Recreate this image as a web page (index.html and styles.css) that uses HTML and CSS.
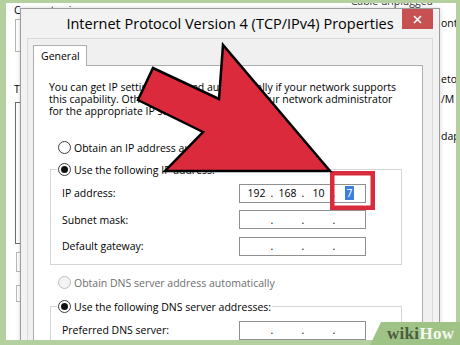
FILE: index.html
```html
<!DOCTYPE html>
<html>

<head>
  <meta charset="UTF-8">
  <meta name="viewport" content="width=device-width, initial-scale=1.0">
  <title>Internet Protocol Version 4 (TCP/IPv4) Properties</title>
  <link rel="stylesheet" href="styles.css">
</head>

<body>
  <div class="screen">
    <div class="desk">
      <!-- windows behind the dialog -->
      <div class="back-left">
        <div class="bl-label">Connect using:</div>
        <div class="bl-box"></div>
        <div class="bl-label bl-items">This connection uses the following items:</div>
        <div class="bl-list"></div>
        <div class="bl-btn"></div>
        <div class="bl-btn bl-btn-2"></div>
      </div>
      <div class="back-right">
        <div class="br-top">Cable unplugged</div>
        <div class="br-frag br-1">ont</div>
        <div class="br-frag br-2">eto</div>
        <div class="br-frag br-3">/M</div>
        <div class="br-frag br-4">dap</div>
      </div>

      <div class="dialog">
        <div class="titlebar">
          <div class="title">Internet Protocol Version 4 (TCP/IPv4) Properties</div>
          <div class="close">
            <svg width="9" height="9" viewBox="0 0 9 9">
              <path d="M1 1 L8 8 M8 1 L1 8" stroke="#fff" stroke-width="1.6" />
            </svg>
          </div>
        </div>

        <div class="client">
          <div class="tab">General</div>
          <div class="panel">
            <p class="intro">You can get IP settings assigned automatically if your network supports<br>
              this capability. Otherwise, you need to ask your network administrator<br>
              for the appropriate IP settings.</p>

            <div class="radio-row row-auto">
              <span class="radio"></span>
              <span>Obtain an IP address automatically</span>
            </div>

            <fieldset class="group">
              <legend>
                <span class="radio-row">
                  <span class="radio on"></span>
                  <span>Use the following IP address:</span>
                </span>
              </legend>
              <div class="ip-rows">
                <div class="ip-row">
                  <span class="ip-label">IP address:</span>
                  <div class="ipbox">
                    <span>192</span><span>.</span><span>168</span><span>.</span><span>10</span><span>.</span><span><b class="sel">7</b></span>
                  </div>
                </div>
                <div class="ip-row">
                  <span class="ip-label">Subnet mask:</span>
                  <div class="ipbox">
                    <span></span><span>.</span><span></span><span>.</span><span></span><span>.</span><span></span>
                  </div>
                </div>
                <div class="ip-row">
                  <span class="ip-label">Default gateway:</span>
                  <div class="ipbox">
                    <span></span><span>.</span><span></span><span>.</span><span></span><span>.</span><span></span>
                  </div>
                </div>
              </div>
            </fieldset>

            <div class="radio-row row-dns disabled">
              <span class="radio"></span>
              <span>Obtain DNS server address automatically</span>
            </div>

            <fieldset class="group group-dns">
              <legend>
                <span class="radio-row">
                  <span class="radio on"></span>
                  <span>Use the following DNS server addresses:</span>
                </span>
              </legend>
              <div class="ip-rows">
                <div class="ip-row">
                  <span class="ip-label">Preferred DNS server:</span>
                  <div class="ipbox">
                    <span></span><span>.</span><span></span><span>.</span><span></span><span>.</span><span></span>
                  </div>
                </div>
                <div class="ip-row">
                  <span class="ip-label">Alternate DNS server:</span>
                  <div class="ipbox">
                    <span></span><span>.</span><span></span><span>.</span><span></span><span>.</span><span></span>
                  </div>
                </div>
              </div>
            </fieldset>
          </div>
        </div>
      </div>
    </div>

    <!-- annotation drawn over the screenshot -->
    <svg class="mark" viewBox="0 0 460 345">
      <rect class="mark-box" x="332.25" y="173.25" width="40.5" height="34.5" />
      <polygon class="mark-arrow" points="330,171 165,171 203,132 138,100 153,68 219,99 223,45" />
    </svg>

    <div class="badge"><span class="badge-wiki">wiki</span><span class="badge-how">How</span></div>
  </div>
</body>

</html>
```

FILE: styles.css
```css
* {
  box-sizing: border-box;
}

body {
  margin: 0;
  background: #b4d09f;
  font-family: "Open Sans", "Noto Sans", sans-serif;
  color: #000;
}

.screen {
  position: relative;
  width: 460px;
  height: 345px;
  padding: 3px 4px 5px 6px;
  background: #b4d09f;
  overflow: hidden;
}

.desk {
  position: relative;
  display: flex;
  justify-content: space-between;
  height: 100%;
  background: #fff;
  overflow: hidden;
  font-size: 10.5px;
}

/* background windows */
.back-left {
  width: 200px;
  padding: 1px 0 0 8px;
}

.bl-label {
  line-height: 13px;
  white-space: nowrap;
}

.bl-box {
  height: 33px;
  margin: 2px 0 0 1px;
  border: 1px solid #b5b5b5;
}

.bl-items {
  margin-top: 31px;
}

.bl-list {
  height: 142px;
  margin: 6px 0 0 1px;
  border: 1px solid #6b6b6b;
}

.bl-btn {
  height: 20px;
  margin: 8px 0 0 2px;
  border: 1px solid #b9b9b9;
}

.bl-btn-2 {
  margin-top: 13px;
  height: 17px;
}

.back-right {
  width: 160px;
  white-space: nowrap;
  line-height: 13px;
}

.br-top {
  margin-top: -8px;
  padding-right: 23px;
  text-align: right;
  color: #333;
}

.br-frag {
  margin-left: 145px;
}

.br-1 {
  margin-top: 9px;
}

.br-2 {
  margin-top: 43px;
}

.br-3 {
  margin-top: 7px;
}

.br-4 {
  margin-top: 24px;
}

/* dialog */
.dialog {
  position: absolute;
  top: 5px;
  left: 14px;
  width: 420px;
  height: 345px;
  padding: 0 6px;
  background: #f2f2f2;
  border: 1px solid #9c9c9c;
  box-shadow: 0 0 4px rgba(0, 0, 0, 0.18);
}

.titlebar {
  display: grid;
  grid-template-columns: 1fr auto 1fr;
  height: 29px;
}

.title {
  grid-column: 2;
  padding-top: 5px;
  font-size: 14.5px;
  line-height: 20px;
  white-space: nowrap;
}

.close {
  grid-column: 3;
  justify-self: end;
  display: grid;
  place-items: center;
  width: 31px;
  height: 20px;
  background: #c75050;
}

.client {
  height: 320px;
  padding: 6px 9px 0 5px;
  background: #f0f0f0;
  border: 1px solid #d9d9d9;
}

.tab {
  position: relative;
  z-index: 1;
  width: 54px;
  height: 21px;
  margin-bottom: -1px;
  padding-left: 7px;
  background: #fff;
  border: 1px solid #adadad;
  border-bottom: none;
  line-height: 20px;
}

.panel {
  height: 300px;
  padding: 14.5px 10px 0 15px;
  background: #fff;
  border: 1px solid #adadad;
}

.intro {
  margin: 0;
  line-height: 12.3px;
  white-space: nowrap;
}

.radio-row {
  display: flex;
  align-items: center;
  gap: 3px;
  height: 14px;
  margin-left: 9px;
  white-space: nowrap;
}

legend .radio-row {
  margin-left: 0;
}

.row-auto {
  margin-top: 23.3px;
}

.radio {
  display: grid;
  place-items: center;
  width: 13px;
  height: 13px;
  background: #fff;
  border: 1px solid #3c3c3c;
  border-radius: 50%;
}

.radio.on::after {
  content: "";
  width: 7px;
  height: 7px;
  background: #111;
  border-radius: 50%;
}

.disabled {
  color: #6d6d6d;
}

.disabled .radio {
  background: #f4f4f4;
  border-color: #bcbcbc;
}

.group {
  margin: 8px 10px 0 1px;
  padding: 7px 0 8px 6px;
  border: 1px solid #d5d5d5;
}

.group legend {
  padding: 0 1px;
}

.row-dns {
  margin-top: 11px;
}

.group-dns {
  margin-top: 10px;
}

.ip-rows {
  display: flex;
  flex-direction: column;
  gap: 7.5px;
}

.ip-row {
  display: flex;
  align-items: center;
  height: 19px;
}

.ip-label {
  width: 182px;
  padding-left: 5px;
}

.ipbox {
  display: grid;
  grid-template-columns: 27px 4px 27px 4px 27px 4px 27px;
  align-items: center;
  width: 127px;
  height: 19px;
  padding-left: 3px;
  border: 1px solid #8f8f8f;
  text-align: center;
}

.sel {
  padding: 0 1px;
  font-weight: normal;
  color: #fff;
  background: #3d7fdc;
}

/* annotation */
.mark {
  position: absolute;
  top: 0;
  left: 0;
  width: 460px;
  height: 345px;
}

.mark-box {
  fill: none;
  stroke: #d92b3d;
  stroke-width: 4.5px;
}

.mark-arrow {
  fill: #dc2a3d;
  stroke: #000;
  stroke-width: 2.5px;
  stroke-linejoin: miter;
}

.badge {
  position: absolute;
  right: 0;
  bottom: 0;
  width: 90px;
  height: 23px;
  padding-left: 17px;
  background: #9fc387;
  clip-path: polygon(11px 0, 100% 0, 100% 100%, 0 100%);
  font-family: "Liberation Serif", serif;
  font-size: 17px;
  font-weight: bold;
  line-height: 23px;
  letter-spacing: 0.3px;
}

.badge-wiki {
  color: #4d5a40;
}

.badge-how {
  color: #f4f8f0;
}
```
